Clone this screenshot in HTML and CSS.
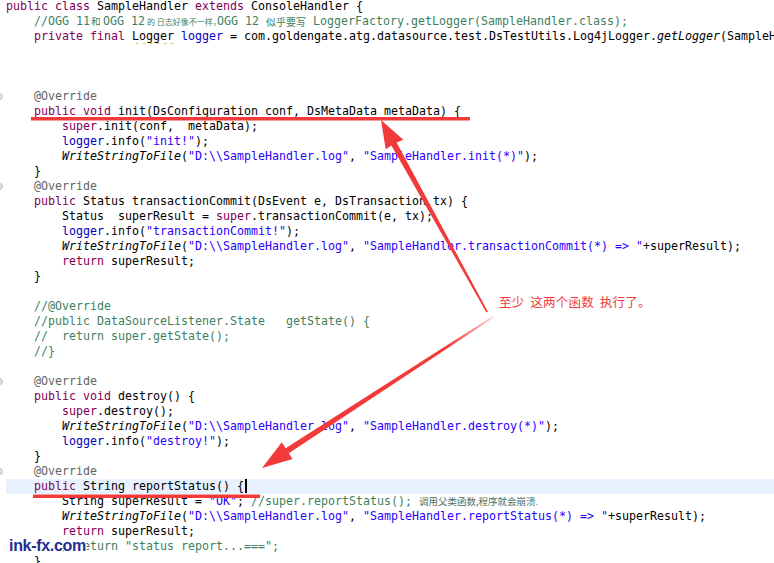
FILE: index.html
```html
<!DOCTYPE html>
<html>
<head>
<meta charset="utf-8">
<link rel="stylesheet" href="styles.css">
</head>
<body>
<div class="editor">
<div class="l"><span class="g"></span><span class="t"><span class="k">public</span> <span class="k">class</span> SampleHandler <span class="k">extends</span> ConsoleHandler {</span></div>
<div class="l"><span class="g"></span><span class="t">    <span class="c">//OGG 11<span class="cj w13">和</span>OGG 12<span class="cj w72">的 日志好像不一样，</span>OGG 12<span class="cj w54">似乎要写</span>LoggerFactory.getLogger(SampleHandler.class);</span></span></div>
<div class="l"><span class="g"></span><span class="t">    <span class="k">private</span> <span class="k">final</span> <span class="warn">Logger</span> <span class="f">logger</span> = com.goldengate.atg.datasource.test.DsTestUtils.Log4jLogger.<span class="i">getLogger</span>(SampleHandler.class);</span></div>
<div class="l"><span class="g"></span><span class="t"> </span></div>
<div class="l"><span class="g"></span><span class="t"> </span></div>
<div class="l"><span class="g"></span><span class="t"> </span></div>
<div class="l"><span class="g"><span class="mk"></span></span><span class="t">    <span class="a">@Override</span></span></div>
<div class="l"><span class="g"></span><span class="t">    <span class="k">public</span> <span class="k">void</span> init(DsConfiguration conf, DsMetaData metaData) {</span></div>
<div class="l"><span class="g"></span><span class="t">        <span class="k">super</span>.init(conf,  metaData);</span></div>
<div class="l"><span class="g"></span><span class="t">        <span class="f">logger</span>.info(<span class="s">"init!"</span>);</span></div>
<div class="l"><span class="g"></span><span class="t">        <span class="i">WriteStringToFile</span>(<span class="s">"D:\\SampleHandler.log"</span>, <span class="s">"SampleHandler.init(*)"</span>);</span></div>
<div class="l"><span class="g"></span><span class="t">    }</span></div>
<div class="l"><span class="g"><span class="mk"></span></span><span class="t">    <span class="a">@Override</span></span></div>
<div class="l"><span class="g"></span><span class="t">    <span class="k">public</span> Status transactionCommit(DsEvent e, DsTransaction tx) {</span></div>
<div class="l"><span class="g"></span><span class="t">        Status  superResult = <span class="k">super</span>.transactionCommit(e, tx);</span></div>
<div class="l"><span class="g"></span><span class="t">        <span class="f">logger</span>.info(<span class="s">"transactionCommit!"</span>);</span></div>
<div class="l"><span class="g"></span><span class="t">        <span class="i">WriteStringToFile</span>(<span class="s">"D:\\SampleHandler.log"</span>, <span class="s">"SampleHandler.transactionCommit(*) =&gt; "</span>+superResult);</span></div>
<div class="l"><span class="g"></span><span class="t">        <span class="k">return</span> superResult;</span></div>
<div class="l"><span class="g"></span><span class="t">    }</span></div>
<div class="l"><span class="g"></span><span class="t"> </span></div>
<div class="l"><span class="g"></span><span class="t">    <span class="c">//@Override</span></span></div>
<div class="l"><span class="g"></span><span class="t">    <span class="c">//public DataSourceListener.State   getState() {</span></span></div>
<div class="l"><span class="g"></span><span class="t">    <span class="c">//  return super.getState();</span></span></div>
<div class="l"><span class="g"></span><span class="t">    <span class="c">//}</span></span></div>
<div class="l"><span class="g"></span><span class="t"> </span></div>
<div class="l"><span class="g"><span class="mk"></span></span><span class="t">    <span class="a">@Override</span></span></div>
<div class="l"><span class="g"></span><span class="t">    <span class="k">public</span> <span class="k">void</span> destroy() {</span></div>
<div class="l"><span class="g"></span><span class="t">        <span class="k">super</span>.destroy();</span></div>
<div class="l"><span class="g"></span><span class="t">        <span class="i">WriteStringToFile</span>(<span class="s">"D:\\SampleHandler.log"</span>, <span class="s">"SampleHandler.destroy(*)"</span>);</span></div>
<div class="l"><span class="g"></span><span class="t">        <span class="f">logger</span>.info(<span class="s">"destroy!"</span>);</span></div>
<div class="l"><span class="g"></span><span class="t">    }</span></div>
<div class="l"><span class="g"><span class="mk"></span></span><span class="t">    <span class="a">@Override</span></span></div>
<div class="l cur"><span class="g"></span><span class="t">    <span class="k">public</span> String reportStatus() {<span class="caret"></span></span></div>
<div class="l"><span class="g"></span><span class="t">        String superResult = <span class="s">"OK"</span>; <span class="c">//super.reportStatus(); <span class="cj2">调用父类函数,程序就会崩溃.</span></span></span></div>
<div class="l"><span class="g"></span><span class="t">        <span class="i">WriteStringToFile</span>(<span class="s">"D:\\SampleHandler.log"</span>, <span class="s">"SampleHandler.reportStatus(*) =&gt; "</span>+superResult);</span></div>
<div class="l"><span class="g"></span><span class="t">        <span class="k">return</span> superResult;</span></div>
<div class="l"><span class="g"></span><span class="t">        <span class="c">//return "status report...===";</span></span></div>
<div class="l"><span class="g"></span><span class="t">    }</span></div>
</div>

<svg class="marks" width="774" height="563" viewBox="0 0 774 563">
  <defs>
    <linearGradient id="fade2" gradientUnits="userSpaceOnUse" x1="262" y1="468" x2="495" y2="316">
      <stop offset="0" stop-color="#f23a3a"/>
      <stop offset="0.8" stop-color="#f23a3a"/>
      <stop offset="1" stop-color="#f23a3a" stop-opacity="0.15"/>
    </linearGradient>
  </defs>
  <rect x="31" y="117" width="439" height="3.5" fill="#f23a3a"/>
  <rect x="33" y="494.5" width="227" height="3.5" fill="#f23a3a"/>
  <polygon points="381,120 403.3,139.7 396.6,142.6 487.8,311.6 486.4,312.4 391.4,145.4 385.7,149.3" fill="#f23a3a"/>
  <polygon points="262,468 281.8,442.3 285.6,448.2 492.4,316.3 493.6,317.8 288.8,453.2 292.6,459.1" fill="url(#fade2)"/>
</svg>
<div class="note">至少 这两个函数 执行了。</div>
<div class="wm">ink-fx.com</div>
</body>
</html>
```
FILE: styles.css
```css
html, body {
  margin: 0;
  padding: 0;
  background: #ffffff;
  overflow: hidden;
  width: 774px;
  height: 563px;
}
body {
  position: relative;
}
.editor {
  margin-top: -1px;
  font-family: "DejaVu Sans Mono", "Liberation Mono", monospace;
  font-size: 11.63px;
  color: #000000;
}
.l {
  display: flex;
  height: 15px;
  line-height: 15px;
  white-space: pre;
}
.g {
  flex: 0 0 6px;
  width: 6px;
  position: relative;
  overflow: hidden;
}
.mk {
  position: absolute;
  left: -4px;
  top: 4px;
  width: 7px;
  height: 7px;
  border-radius: 50%;
  background: #dde2e8;
  border: 1px solid #b9c2ce;
  box-sizing: border-box;
}
.t {
  flex: 1 1 auto;
  overflow: hidden;
  white-space: pre;
}
.cur .t {
  background: #e8f2fe;
}
.k { color: #7f0055; }
.f { color: #0000c0; }
.s { color: #2a00ff; }
.c { color: #3f7f5f; }
.a { color: #646464; }
.i { font-style: italic; }
.warn {
  text-decoration: underline wavy #e2bc1a;
  text-decoration-thickness: 1px;
  text-underline-offset: 2px;
}
.cj {
  display: inline-block;
  font-family: "Noto Sans CJK SC", sans-serif;
  vertical-align: top;
  white-space: pre;
  overflow: hidden;
  box-sizing: border-box;
}
.w13 { width: 13px; padding-left: 1px; font-size: 9.5px; }
.w72 { width: 72px; padding-left: 2px; font-size: 8px; }
.w54 { width: 54px; padding-left: 7px; font-size: 10px; }
.cj2 {
  font-family: "Noto Sans CJK SC", sans-serif;
  font-size: 9.5px;
  color: #4f6f60;
}
.caret {
  display: inline-block;
  width: 2px;
  height: 14px;
  background: #000;
  vertical-align: top;
  margin-left: 1px;
}
.marks {
  position: absolute;
  left: 0;
  top: 0;
  pointer-events: none;
}
.note {
  position: absolute;
  left: 499px;
  top: 293px;
  font-family: "Noto Sans CJK SC", sans-serif;
  font-size: 12.5px;
  line-height: 18px;
  color: #f23a3a;
  white-space: pre;
  word-spacing: 3px;
  letter-spacing: 0.2px;
}
.wm {
  position: absolute;
  left: 9px;
  top: 537px;
  font-family: "Liberation Sans", Arial, sans-serif;
  font-weight: bold;
  font-size: 16px;
  letter-spacing: -0.3px;
  line-height: 18px;
  color: #1f2d8f;
  text-shadow: 1px 0 0 #fff, -1px 0 0 #fff, 0 1px 0 #fff, 0 -1px 0 #fff, 1px 1px 0 #fff, -1px -1px 0 #fff;
}
```
